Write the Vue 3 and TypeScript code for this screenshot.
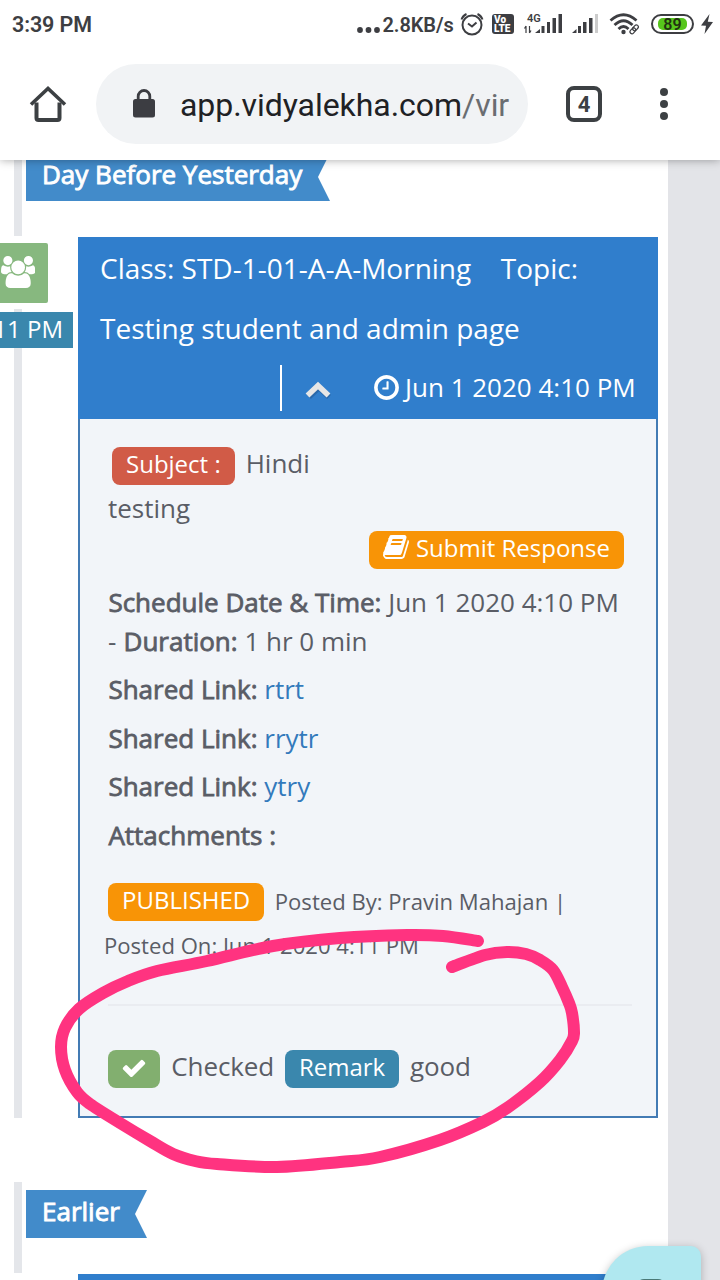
<script setup lang="ts">
interface Point { x: number; y: number }

const links: string[] = ['rtrt', 'rrytr', 'ytry']

const stroke: Point[] = [
  [478, 941], [443, 936], [407, 935], [340, 938], [273, 946], [207, 961], [157, 971], [128, 981], [103, 993], [79, 1009],
  [65, 1028], [61, 1047], [65, 1070], [77, 1092], [90, 1104], [120, 1123], [150, 1141], [173, 1154], [195, 1161], [217, 1164], [277, 1167],
  [340, 1162], [380, 1157], [440, 1140], [483, 1122], [507, 1108], [540, 1082], [560, 1060], [572, 1041], [574, 1032],
  [572, 1013], [569, 1003], [562, 987], [553, 970], [540, 960], [526, 954], [507, 952], [485, 955], [452, 967],
].map(([x, y]) => ({ x, y }))

// Smooth curve through every sampled point of the pen stroke
function curve(p: Point[]): string {
  let d = `M${p[0].x} ${p[0].y}`
  for (let i = 0; i < p.length - 1; i++) {
    const a = p[Math.max(0, i - 1)]
    const b = p[i]
    const c = p[i + 1]
    const e = p[Math.min(p.length - 1, i + 2)]
    d += `C${b.x + (c.x - a.x) / 6} ${b.y + (c.y - a.y) / 6} ${c.x - (e.x - b.x) / 6} ${c.y - (e.y - b.y) / 6} ${c.x} ${c.y}`
  }
  return d
}
const penPath = curve(stroke)
</script>

<template>
  <div class="screen">
    <header class="status">
      <span class="time">3:39 PM</span>
      <svg class="dots" width="24" height="8" viewBox="0 0 24 8"><circle cx="3" cy="4" r="2.9" /><circle cx="11.5" cy="4" r="2.9" /><circle cx="20" cy="4" r="2.9" /></svg>
      <span class="speed">2.8KB/s</span>
      <svg class="alarm" width="24" height="24" viewBox="0 0 24 24" fill="none" stroke="#3d3e42" stroke-width="2">
        <circle cx="12" cy="13" r="9.500" /><path d="M8 11.500l4 3 4.500-4M1.500 7.500q1.500-4 5-5.500M22.500 7.500q-1.500-4-5-5.500" />
      </svg>
      <span class="volte"><b>Vo</b><b>LTE</b></span>
      <svg class="sig4" width="40" height="24" viewBox="0 0 40 24">
        <path d="M3 22v-7M3 15l-1.500 2.500M6.500 15v7M6.500 22l1.500-2.500" fill="none" stroke="#3d3e42" stroke-width="1.200" />
        <path d="M12 22l5-4v4zM18.500 15h3v7h-3zM24 11h3v11h-3zM29.500 7h3.500v15h-3.500zM35.500 3h3.500v19h-3.500z" />
        <text x="4" y="10.500" class="g4">4G</text>
      </svg>
      <svg class="sig" width="28" height="24" viewBox="0 0 28 24">
        <path d="M1 22l4.500-4v4zM7 15h3v7h-3zM12 11h3.500v11h-3.500zM18 7h3.500v15h-3.500z" /><path d="M24 3h3v19h-3z" fill="#ccc" />
      </svg>
      <svg class="wifi" width="32" height="24" viewBox="0 0 32 24" fill="none" stroke="#3d3e42" stroke-width="2.800">
        <path d="M1.500 8.500Q14.500-3 27.500 8.500M5.500 13Q14.500 4.500 23.500 13M9.500 17Q14.500 12 19.500 17" /><circle cx="14.500" cy="20" r="2.200" fill="#3d3e42" stroke="none" />
        <g stroke-width="1.200" transform="rotate(-48 25 17.500)"><rect x="20" y="15.500" width="6.500" height="4" rx="2" /><rect x="24" y="15.500" width="6.500" height="4" rx="2" /></g>
      </svg>
      <span class="battery"><i>89</i></span>
      <svg class="bolt" width="12" height="20" viewBox="0 0 12 20"><path d="M8.500 0L0 11.500l5 .3L3.500 20 12 8l-5.200-.3z" /></svg>
    </header>

    <nav class="toolbar">
      <svg class="home" width="40" height="40" viewBox="0 0 40 40" fill="none" stroke="#3c4043" stroke-width="4">
        <path d="M8.500 18.500V34q0 2 2 2h19q2 0 2-2V18.500" /><path d="M3 20.500L20 4.500l17 16" stroke-width="3.600" />
      </svg>
      <div class="address">
        <svg width="24" height="30" viewBox="0 0 24 30"><rect x="1" y="10" width="22" height="18.500" rx="2.500" fill="#3c3d42" /><path d="M6.200 11V7.300a5.800 5.800 0 0 1 11.600 0V11" fill="none" stroke="#3c3d42" stroke-width="2.800" /></svg>
        <span class="url">app.vidyalekha.com<em>/vir</em></span>
      </div>
      <span class="tabs">4</span>
      <span class="more"><i></i><i></i><i></i></span>
    </nav>

    <main class="page">
      <div class="timeline">
        <section class="group first">
          <span class="line"></span>
          <h2 class="flag"><span>Day Before Yesterday</span></h2>
        </section>

        <section class="entry">
          <aside class="gutter">
            <div class="badge">
              <svg width="34.300" height="32" viewBox="0 0 1920 1792" fill="#fff"><path d="M593 896q-162 5-265 128h-134q-82 0-138-40.500t-56-118.500q0-353 124-353 6 0 43.500 21t97.500 42.500 119 21.500q67 0 133-23-5 37-5 66 0 139 81 256zm1071 637q0 120-73 189.500t-194 69.500h-874q-121 0-194-69.500t-73-189.500q0-53 3.500-103.500t14-109 26.500-108.500 43-97.500 62-81 85.500-53.500 111.500-20q10 0 43 21.500t73 48 107 48 135 21.500 135-21.500 107-48 73-48 43-21.500q61 0 111.500 20t85.500 53.500 62 81 43 97.500 26.500 108.500 14 109 3.500 103.500zm-1024-1277q0 106-75 181t-181 75-181-75-75-181 75-181 181-75 181 75 75 181zm704 384q0 159-112.500 271.500t-271.500 112.500-271.500-112.500-112.500-271.500 112.500-271.500 271.500-112.500 271.500 112.500 112.500 271.500zm576 225q0 78-56 118.500t-138 40.500h-134q-103-123-265-128 81-117 81-256 0-29-5-66 66 23 133 23 59 0 119-21.500t97.500-42.500 43.500-21q124 0 124 353zm-128-609q0 106-75 181t-181 75-181-75-75-181 75-181 181-75 181 75 75 181z" /></svg>
            </div>
            <span class="line stub"></span>
            <span class="stamp">11 PM</span>
            <span class="line"></span>
          </aside>
          <article class="card">
            <div class="head">
              <p class="title"><span class="t1">Class: STD-1-01-A-A-Morning</span><span class="t2">Topic:</span></p>
              <p class="title"><span class="t3">Testing student and admin page</span></p>
              <p class="meta">
                <span class="rule"></span>
                <svg class="chev" width="28" height="20" viewBox="0 0 28 20"><path d="M4 14.500L14 5l10 9.500" fill="none" stroke="#2968aa" stroke-width="5.500" transform="translate(1 1.500)" /><path d="M3.500 14.500L14 4.500l10.500 10" fill="none" stroke="#e6e6e6" stroke-width="5.500" /></svg>
                <svg class="clock" width="29" height="29" viewBox="0 0 1792 1792" fill="#fff"><path d="M1024 544v448q0 14-9 23t-23 9h-320q-14 0-23-9t-9-23v-64q0-14 9-23t23-9h224v-352q0-14 9-23t23-9h64q14 0 23 9t9 23zm416 352q0-148-73-273t-198-198-273-73-273 73-198 198-73 273 73 273 198 198 273 73 273-73 198-198 73-273zm224 0q0 209-103 385.500t-279.500 279.500-385.500 103-385.500-103-279.500-279.500-103-385.500 103-385.500 279.500-279.500 385.500-103 385.500 103 279.500 279.500 103 385.500z" /></svg>
                <span class="date">Jun 1 2020 4:10 PM</span>
              </p>
            </div>
            <div class="body">
              <p class="row subject"><span class="tag red">Subject :</span><span>Hindi</span></p>
              <p class="row testing">testing</p>
              <p class="row submit">
                <span class="tag orange"><svg width="28" height="28" viewBox="0 0 1792 1792" fill="#fff"><path d="M1703 478q40 57 18 129l-275 906q-19 64-76.500 107.500t-122.500 43.500h-923q-77 0-148.500-53.500t-99.500-131.500q-24-67-2-127 0-4 3-27t4-37q1-8-3-21.500t-3-19.500q2-11 8-21t16.500-23.500 16.500-23.500q23-38 45-91.500t30-91.500q3-10 .5-30t-.5-28q3-11 17-28t17-23q21-36 42-92t25-90q1-9-2.500-32t.5-28q4-13 22-30.500t22-22.500q19-26 42.500-84.500t27.500-96.500q1-8-3-25.500t-2-26.500q2-8 9-18t18-23 17-21q8-12 16.500-30.500t15-35 16-36 19.500-32 26.500-23.500 36-11.500 47.500 5.500l-1 3q38-9 51-9h761q74 0 114 56t18 130l-274 906q-36 119-71.500 153.500t-128.500 34.500h-869q-27 0-38 15-11 16-1 43 24 70 144 70h923q29 0 56-15.500t35-41.500l300-987q7-22 5-57 38 15 59 43zm-1064 2q-4 13 2 22.500t20 9.500h608q13 0 25.500-9.500t16.500-22.500l21-64q4-13-2-22.500t-20-9.500h-608q-13 0-25.500 9.500t-16.500 22.500zm-83 256q-4 13 2 22.500t20 9.500h608q13 0 25.500-9.500t16.500-22.500l21-64q4-13-2-22.500t-20-9.500h-608q-13 0-25.500 9.500t-16.500 22.500z" /></svg><span>Submit Response</span></span>
              </p>
              <p class="row r39"><strong>Schedule Date &amp; Time:</strong>&nbsp;Jun 1 2020 4:10 PM</p>
              <p class="row r39">-&nbsp;<strong>Duration:</strong>&nbsp;1 hr 0 min</p>
              <p v-for="link in links" :key="link" class="row link"><strong>Shared Link:</strong>&nbsp;<a>{{ link }}</a></p>
              <p class="row link"><strong>Attachments :</strong></p>
              <p class="row posted"><span class="tag orange">PUBLISHED</span><small>Posted By: Pravin Mahajan |</small></p>
              <p class="row on"><small>Posted On: Jun 1 2020 4:11 PM</small></p>
              <hr />
              <p class="row checked">
                <span class="tag green"><svg width="26" height="26" viewBox="0 0 1792 1792" fill="#fff"><path d="M1671 566q0 40-28 68l-724 724-136 136q-28 28-68 28t-68-28l-136-136-362-362q-28-28-28-68t28-68l136-136q28-28 68-28t68 28l294 295 656-657q28-28 68-28t68 28l136 136q28 28 28 68z" /></svg></span>
                <span>Checked</span><span class="tag teal">Remark</span><span>good</span>
              </p>
            </div>
          </article>
        </section>

        <section class="group second">
          <span class="line"></span>
          <h2 class="flag"><span>Earlier</span></h2>
        </section>
        <div class="next"></div>
      </div>
    </main>

    <div class="chat"><i></i></div>
    <svg class="pen" width="720" height="1280" viewBox="0 0 720 1280"><path :d="penPath" /></svg>
  </div>
</template>

<style>
body { margin: 0; background: #fff; }
</style>

<style scoped>
.screen { position: relative; width: 720px; height: 1280px; overflow: hidden; background: #fff; display: flex; flex-direction: column; font-family: "Open Sans", "Noto Sans", sans-serif; }
p, h2 { margin: 0; font-weight: 400; }
svg { flex: none; display: block; }
span, small, strong, a { white-space: nowrap; }

.status { height: 48px; flex: none; display: flex; align-items: center; font-family: Roboto, sans-serif; color: #3d3e42; fill: #3d3e42; font-weight: 600; }
.time { font-size: 21.500px; margin-left: 12px; width: 345px; line-height: 48px; letter-spacing: -.1px; padding-top: 1px; flex: none; }
.dots { margin-top: 12px; }
.speed { font-size: 20px; width: 77px; margin-left: 1.500px; letter-spacing: -.1px; padding-top: 1px; flex: none; }
.volte { margin-left: 8.500px; width: 22px; height: 20px; border-radius: 3px; background: #3d3e42; color: #fff; display: flex; flex-direction: column; font-size: 10px; line-height: 9px; padding-top: 1px; box-sizing: border-box; flex: none; }
.volte b { padding-left: 2px; }
.sig4 { margin-left: 9px; margin-top: -3px; }
.sig { margin-left: 7.500px; margin-top: -3px; }
.g4 { font-size: 11px; }
.wifi { margin-left: 10.500px; }
.battery { margin-left: 10px; width: 43px; height: 20px; flex: none; box-sizing: border-box; border: 2px solid #3d3e42; border-radius: 10px; padding: 2px 5px; display: flex; }
.battery i { flex: 1; background: #57c61c; border-radius: 5px; font-style: normal; font-size: 16px; line-height: 13px; text-align: center; color: #223311; }
.bolt { margin-left: 7px; }

.toolbar { height: 112px; flex: none; display: flex; align-items: center; font-family: Roboto, sans-serif; background: #fff; position: relative; z-index: 2; box-shadow: 0 0 9px rgba(0, 0, 0, .35); clip-path: inset(0 0 -14px 0); }
.home { margin-left: 28px; }
.address { margin-left: 28px; width: 432px; height: 80px; border-radius: 40px; background: #f1f3f5; display: flex; align-items: center; box-sizing: border-box; padding-left: 36px; flex: none; }
.url { margin-left: 24px; margin-top: 2px; font-size: 32px; color: #202124; letter-spacing: -.05px; }
.url em { font-style: normal; color: #6a6d71; }
.tabs { margin-left: 38px; width: 36px; height: 36px; flex: none; box-sizing: border-box; border: 4px solid #3c4043; border-radius: 8px; font-size: 22px; font-weight: 700; color: #3c4043; line-height: 29px; text-align: center; }
.more { margin-left: 58px; display: flex; flex-direction: column; gap: 4px; }
.more i { width: 8px; height: 8px; border-radius: 50%; background: #3c4043; }

.page { height: 1120px; flex: none; background: #e3e4e8; overflow: hidden; }
.timeline { display: flow-root; width: 668px; height: 1120px; background: #fff; }
.line { width: 8px; margin-left: 14px; background: #e4e6ea; flex: none; }
.group { display: flex; align-items: flex-start; }
.group .line { margin-right: 4px; align-self: stretch; }
.first { height: 83px; margin-top: -7px; }
.flag { height: 48px; width: 304px; background: #428bca; color: #fff; font-size: 26px; line-height: 43px; padding-left: 16px; box-sizing: border-box; clip-path: polygon(0 0, 100% 0, calc(100% - 12px) 50%, 100% 100%, 0 100%); -webkit-text-stroke: .9px #fff; }
.second { height: 91px; margin-top: 64px; }
.second .flag { width: 121px; margin-top: 8px; }
.next { height: 8px; margin: 1px 10px 0 78px; background: #307ecc; }

.entry { display: flex; height: 882px; }
.gutter { width: 78px; display: flex; flex-direction: column; }
.badge { margin-top: 7px; width: 48px; height: 60px; flex: none; border-radius: 0 2px 2px 0; background: #87b87f; box-sizing: border-box; padding: 13px 0 0 1px; }
.stub { height: 3px; margin-top: 6px; }
.stamp { width: 73px; height: 36px; flex: none; box-sizing: border-box; background: #3a87ad; color: #fff; font-size: 24px; line-height: 33px; padding-right: 10px; display: flex; justify-content: flex-end; overflow: hidden; }
.stamp + .line { flex: 1; }

.card { width: 580px; height: 881px; margin-top: 1px; box-sizing: border-box; display: flex; flex-direction: column; }
.head { height: 182px; flex: none; box-sizing: border-box; background: #307ecc; color: #fff; padding: 2px 22px 0; font-size: 26px; }
.title { height: 60px; line-height: 58px; display: flex; gap: 29.500px; font-size: 28px; }
.meta { height: 60px; display: flex; align-items: center; padding-left: 180px; line-height: 56px; }
.rule { width: 2px; height: 46px; background: #fff; margin-top: -2px; }
.chev { margin-left: 22px; margin-top: 3px; }
.clock { margin-left: 39.500px; margin-top: -3px; }
.date { margin-left: 4.500px; margin-top: -4px; }
.body { flex: 1; box-sizing: border-box; border: 2px solid #437bb4; border-top: 0; background: #f2f5f9; color: #5a5d66; padding: 28px 24px 0 28px; font-size: 26px; }
.row { display: flex; align-items: center; }
.tag { height: 38px; box-sizing: border-box; border-radius: 8px; color: #fff; font-size: 24px; line-height: 34px; padding: 0 14px; flex: none; display: flex; }
.red { background: #d15b47; }
.orange { background: #f89406; }
.green { background: #82af6f; width: 52px; padding: 5px 13px; }
.teal { background: #3a87ad; padding: 0 13.500px; }
.subject { height: 38px; padding-left: 4px; gap: 11px; }
.subject > span:not(.tag), .checked > span:not(.tag) { line-height: 32px; padding-bottom: 5px; }
.subject > span:not(.tag) { padding-bottom: 6px; }
.testing { height: 46px; line-height: 46px; }
.submit { height: 38px; justify-content: flex-end; padding-right: 8px; }
.submit .tag svg { margin: 2px 6px 0 -1px; }
strong { font-weight: 400; -webkit-text-stroke: .8px #5a5d66; padding-left: .4px; }
.r39 { height: 39px; line-height: 39px; }
.submit + .r39 { margin-top: 14px; }
.link { height: 48.700px; line-height: 48.700px; }
.r39 + .link { margin-top: 4px; }
a { color: #337abc; }
small { font-size: 22.100px; }
.posted { margin-top: 23px; height: 38px; gap: 10.500px; line-height: 36px; }
.posted small { margin-top: -1px; }
.on { height: 50px; line-height: 46px; margin-left: -4px; padding-bottom: 2px; box-sizing: border-box; }
hr { border: 0; height: 2px; background: #eaecf1; margin: 33px 0 0; }
.checked { margin-top: 44px; height: 38px; gap: 11.300px; }
.checked .tag + span { letter-spacing: -.1px; }

.chat { position: absolute; left: 602px; top: 1246px; width: 99px; height: 98px; border-radius: 46px 10px 0 46px; background: #b0e8f0; box-shadow: 0 2px 8px rgba(0, 0, 0, .25); z-index: 3; }
.chat i { display: block; width: 30px; height: 10px; margin: 33px 0 0 34px; border-radius: 8px 8px 0 0; background: #497876; }
.pen { position: absolute; left: 0; top: 0; z-index: 4; }
.pen path { fill: none; stroke: #ff3380; stroke-width: 12; stroke-linecap: round; stroke-linejoin: round; }
</style>
